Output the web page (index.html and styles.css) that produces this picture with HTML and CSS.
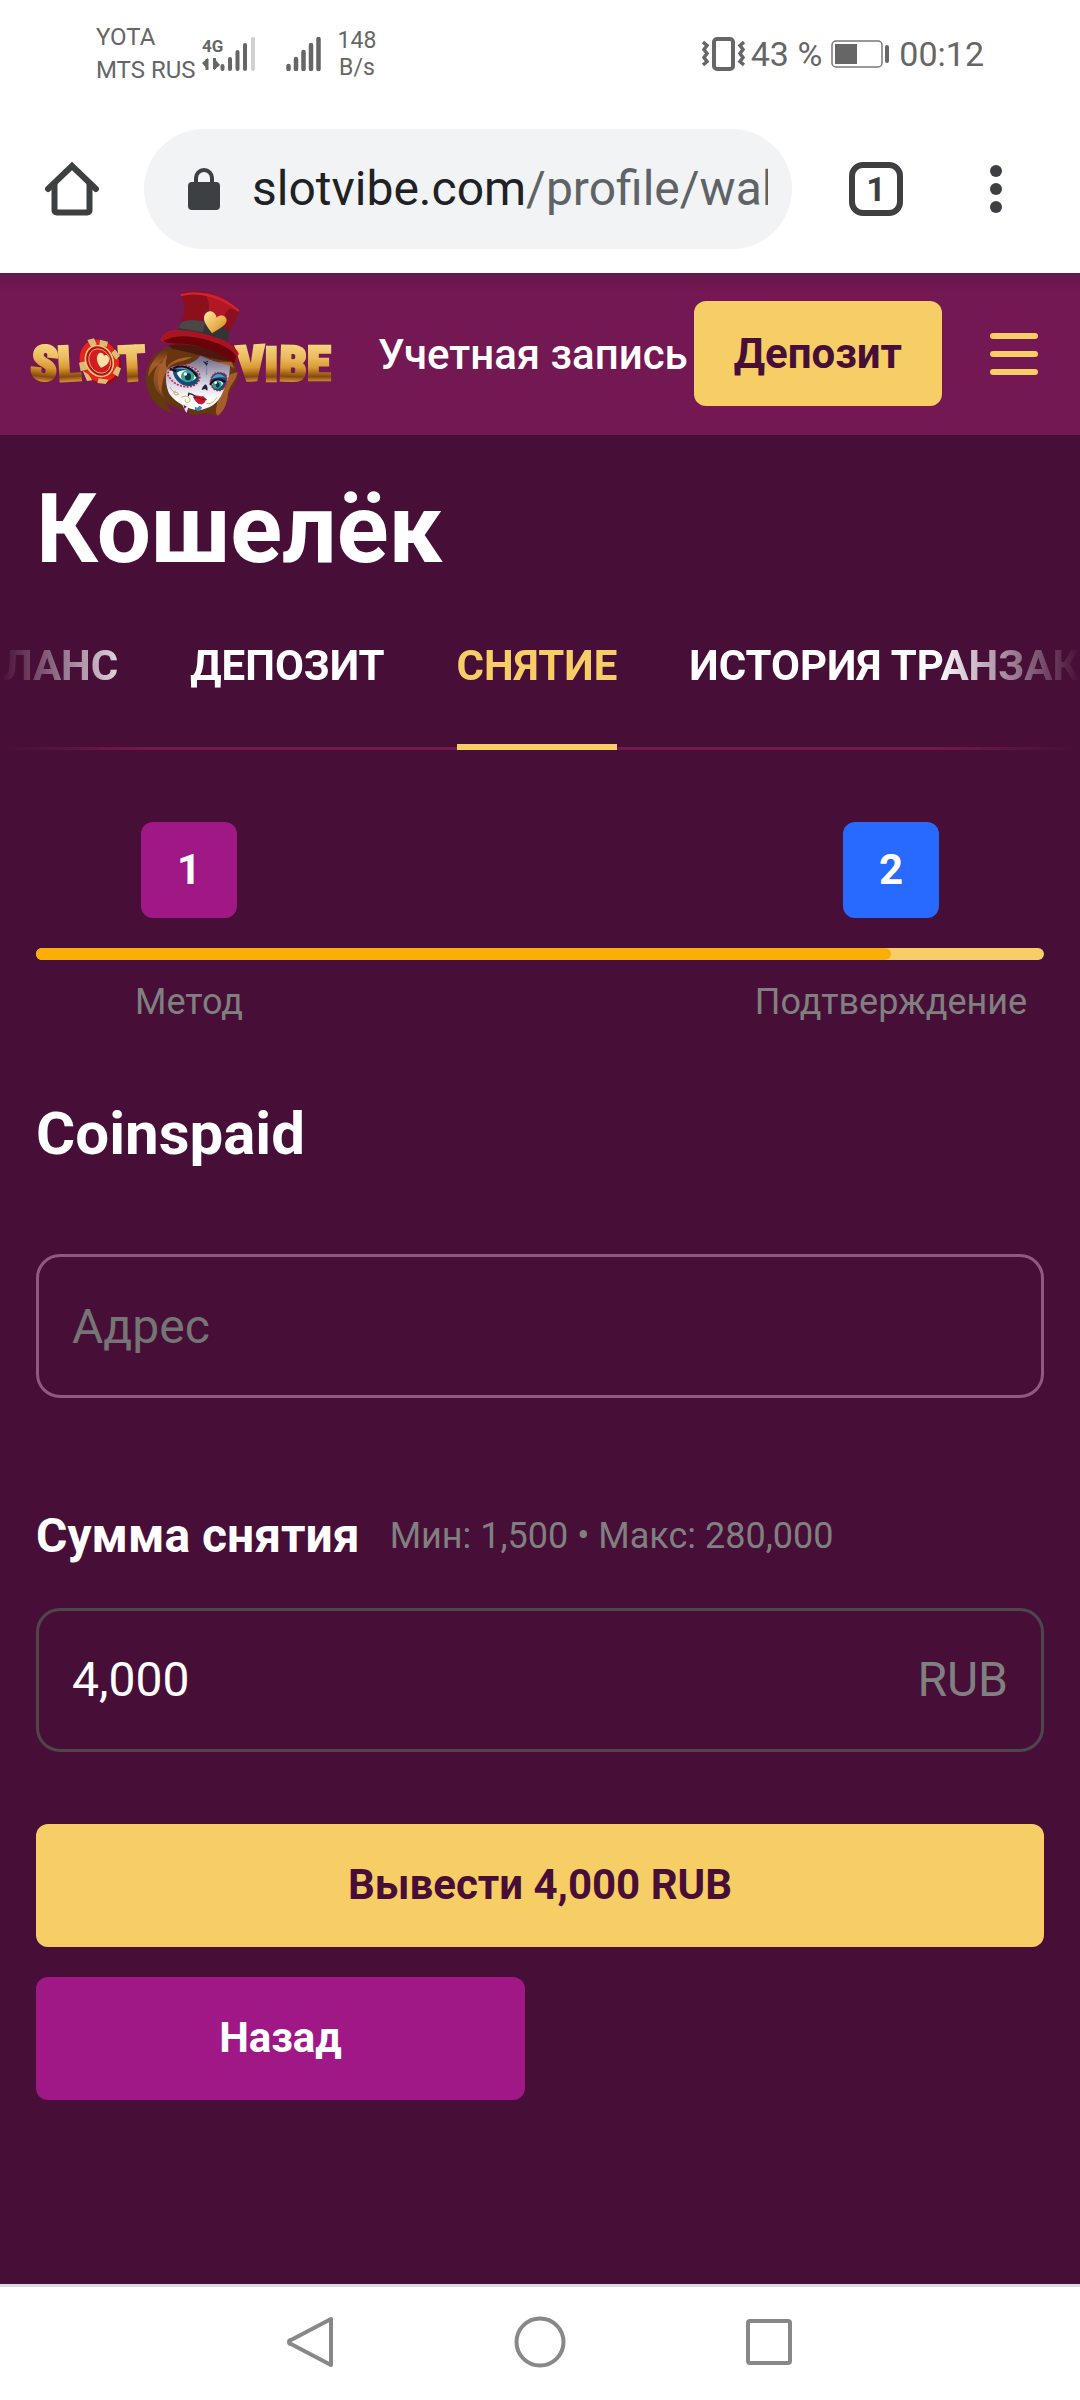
FILE: index.html
```html
<!DOCTYPE html>
<html lang="ru">
<head>
  <meta charset="UTF-8">
  <meta name="viewport" content="width=device-width, initial-scale=1.0">
  <title>Кошелёк - SlotVibe</title>
  <link rel="stylesheet" href="styles.css">
</head>
<body>

  <!-- Status bar -->
  <div class="status">
    <div class="status-side">
      <div class="carrier">YOTA<br>MTS RUS</div>
      <svg class="network" width="54" height="34" viewBox="0 0 54 34" aria-hidden="true">
        <text class="network-type" x="0" y="15">4G</text>
        <path d="M0 26l6-5v12M18 28l-6 5V21" fill="#666"/>
        <path d="M5 22v11M12.500 21v11" stroke="#666" stroke-width="3"/>
        <g stroke="#666" stroke-width="4" stroke-linecap="round">
          <path d="M20.500 29v3M28 22v10M35.500 15v17M43 8v24"/>
          <path d="M51 2v30" stroke="#d0d0d0"/>
        </g>
      </svg>
      <svg class="signal" width="36" height="34" viewBox="0 0 36 34" aria-hidden="true">
        <path d="M2.500 29v3M10 22v10M17.500 15v17M25 8v24M32.500 2v30" stroke="#666" stroke-width="4.500" stroke-linecap="round"/>
      </svg>
      <div class="speed">148<br>B/s</div>
    </div>
    <div class="status-side">
      <svg width="43" height="34" viewBox="0 0 43 34" fill="none" stroke="#666" aria-hidden="true">
        <rect x="12" y="2" width="19" height="30" rx="3" stroke-width="4"/>
        <path d="M1 5l4 3.500-3 4 3 4-3 4 3 4-4 3.500M42 5l-4 3.500 3 4-3 4 3 4-3 4 4 3.500" stroke-width="3.500"/>
      </svg>
      <span class="battery-text">43 %</span>
      <svg class="battery" width="59" height="28" viewBox="0 0 59 28" aria-hidden="true">
        <rect x="1" y="1" width="50" height="26" rx="4" fill="none" stroke="#777" stroke-width="1.500"/>
        <rect x="4" y="4" width="22" height="20" fill="#666"/>
        <rect x="54" y="5" width="4" height="18" rx="2" fill="#666"/>
      </svg>
      <span class="clock">00:12</span>
    </div>
  </div>

  <!-- Browser toolbar -->
  <div class="toolbar">
    <button class="icon-btn" type="button" aria-label="Главная">
      <svg width="54" height="56" viewBox="0 0 54 56" fill="none" stroke="#3c4043" stroke-width="6">
        <path d="M3 28L27 5l24 23" stroke-linecap="round"/>
        <path d="M9.500 22v27.500a2 2 0 0 0 2 2h31a2 2 0 0 0 2-2V22"/>
      </svg>
    </button>
    <button class="address" type="button">
      <svg width="32" height="43" viewBox="0 0 32 43" aria-hidden="true">
        <path d="M8 17v-7a8 8 0 0 1 16 0v7" fill="none" stroke="#3c4043" stroke-width="4"/>
        <rect y="14" width="32" height="28" rx="4" fill="#3c4043"/>
      </svg>
      <span class="url">slotvibe.com<span class="url-path">/profile/wallet</span></span>
    </button>
    <button class="tab-count" type="button">1</button>
    <button class="icon-btn" type="button" aria-label="Меню браузера">
      <svg width="12" height="48" viewBox="0 0 12 48" fill="#3c4043">
        <circle cx="6" cy="6" r="6"/><circle cx="6" cy="24" r="6"/><circle cx="6" cy="42" r="6"/>
      </svg>
    </button>
  </div>

  <!-- Site header -->
  <header class="header">
    <a class="logo" href="#" aria-label="SlotVibe">
      <svg width="302" height="128" viewBox="90 60 906 384">
        <defs>
          <linearGradient id="gold" x1="0" y1="205" x2="0" y2="340" gradientUnits="userSpaceOnUse">
            <stop offset="0" stop-color="#fbe08e"/>
            <stop offset=".45" stop-color="#e9b95c"/>
            <stop offset=".65" stop-color="#d99a32"/>
            <stop offset=".85" stop-color="#8a4a0c"/>
            <stop offset="1" stop-color="#e0a848"/>
          </linearGradient>
          <linearGradient id="heart" x1="0" y1="0" x2="1" y2="1">
            <stop offset="0" stop-color="#ffe9a0"/>
            <stop offset=".6" stop-color="#e8b04c"/>
            <stop offset="1" stop-color="#b87718"/>
          </linearGradient>
          <linearGradient id="face" x1="0" y1="0" x2="0" y2="1">
            <stop offset="0" stop-color="#66607e"/>
            <stop offset=".5" stop-color="#d5d3e2"/>
            <stop offset=".8" stop-color="#ffffff"/>
          </linearGradient>
          <linearGradient id="hair" x1="0" y1="0" x2="0" y2="1">
            <stop offset="0" stop-color="#5c2f12"/>
            <stop offset=".3" stop-color="#a65d2b"/>
            <stop offset="1" stop-color="#70401b"/>
          </linearGradient>
        </defs>

        <!-- lettering -->
        <g class="logo-text" fill="url(#gold)" stroke="url(#gold)">
          <text x="134" y="331" transform="rotate(6 134 270)">S</text>
          <text x="207" y="332" transform="rotate(-3 207 270)">L</text>
          <text x="396" y="332" transform="rotate(-3 396 270)">T</text>
          <text x="752" y="331" transform="rotate(-3 752 270)">V</text>
          <text x="814" y="332">I</text>
          <text x="880" y="332" transform="rotate(2 880 270)">B</text>
          <text x="957" y="331">E</text>
        </g>

        <!-- chip -->
        <ellipse cx="303" cy="277" rx="58" ry="68" fill="#8f0d13" transform="rotate(-28 303 277)"/>
        <ellipse cx="298" cy="273" rx="57" ry="66" fill="#e5231f" transform="rotate(-28 298 273)"/>
        <g fill="#dcbb72">
          <path d="M262 210l20-5 8 18-17 8zM300 209l24 6-4 16-22-5zM345 238l15 19-12 12-14-20zM350 289l13 6-9 25-16-10zM296 325l30 4-9 13-25-3zM248 302l17 11 12 18-16 2zM237 278l20-4 7 24-22 6z"/>
        </g>
        <ellipse cx="298" cy="273" rx="40" ry="48" fill="#b51319" stroke="#f0c975" stroke-width="5" transform="rotate(-28 298 273)"/>
        <ellipse cx="299" cy="273" rx="31" ry="38" fill="#d11d20" stroke="#ffd994" stroke-width="2" transform="rotate(-28 299 273)"/>
        <path d="M303 293c-9-10-15-25-11-36 5-12 17-11 20 0 8-6 17 3 15 15-2 10-12 17-24 21z" fill="#ffe2a4"/>

        <!-- hair behind -->
        <path d="M498 233c-35 15-61 50-61 92 0 30 14 62 37 82 15 13 32 18 45 23-12-12-19-25-18-33 25 18 42 22 55 24l24 16 35-7 30 6c23-9 35-27 41-54 2-20 17-31 28-64-5-3-7-8-6-20l-6-32-90-38z" fill="#63370f"/>
        <path d="M500 237c-33 18-57 51-55 85 12-27 32-44 55-50-25 35-27 75-3 115-25-15-39-40-36-67 6-38 27-56 70-66l50 4 5-21z" fill="url(#hair)"/>
        <path d="M500 257c-25 28-37 75-16 115 1-42 12-76 42-102zM663 323c24-8 36-14 50-16-4 25-25 38-29 65-4 32-12 53-31 65-6-5-6-12-4-22z" fill="#a65d2b"/>

        <!-- face -->
        <path d="M520 289c32 0 68-10 82-34 21 15 52 24 87 26 5 30-12 65-23 91-14 30-39 45-73 49-30-5-64-21-85-49-10-20-13-52-8-72z" fill="url(#face)"/>
        <path d="M503 310c18-29 52-29 83-13 18 12 17 36 0 47-20 14-58 4-72-15-7-8-10-12-11-19z" fill="#d8d7e7" stroke="#d6213d" stroke-width="5" stroke-dasharray="6 4"/>
        <path d="M518 300c20-17 65-10 76 11 9 19-4 34-23 37-26 3-51-18-53-48z" fill="#174a76"/>
        <path d="M525 297c20-14 50-10 65 11-20-9-43-14-65-11z" fill="#5ba3c9"/>
        <path d="M631 334c3-25 21-32 45-22 10 12 5 45-16 50-16 3-28-10-29-28z" fill="#174a76" stroke="#d6213d" stroke-width="4" stroke-dasharray="5 4"/>
        <path d="M634 328c12-22 29-19 44-5-17-2-31-1-44 5z" fill="#4e9ac5"/>
        <path d="M530 309c18-15 47-8 59 14-14 17-46 17-59-14z" fill="#f8faf5"/>
        <ellipse cx="563" cy="319" rx="20" ry="18" fill="#37a291"/>
        <ellipse cx="564" cy="320" rx="9" ry="11" fill="#0b3843"/>
        <circle cx="556" cy="312" r="5" fill="#fff"/>
        <path d="M636 342c12-15 26-13 34-2-6 14-27 20-34 2z" fill="#f8faf5"/>
        <ellipse cx="651" cy="344" rx="14" ry="12" fill="#35a18d"/>
        <ellipse cx="653" cy="345" rx="6" ry="8" fill="#0b3843"/>
        <circle cx="647" cy="338" r="4" fill="#fff"/>
        <path d="M522 294c24-9 52-4 67 23M526 303l-14-6M631 342c12-16 29-17 43-7" fill="none" stroke="#120e1c" stroke-width="6" stroke-linecap="round"/>
        <path d="M614 280c-7-8-5-10 0-5 4-5 13-4 10 4l-4 9zM617 343c-8 5-11 12-12 17l10-3 7 5c2-8 0-14-5-19z" fill="#252039"/>
        <path d="M597 261l25 17 17-10M620 288v27" fill="none" stroke="#817b99" stroke-width="3"/>
        <path d="M565 371c15-3 24 17 55 18M567 368l-2 10" fill="none" stroke="#271629" stroke-width="4"/>
        <path d="M579 380c15-9 20 1 30-2l9 8c-2 15-13 19-23 15-8-5-12-13-16-21z" fill="#ca182e"/>
        <path d="M580 381l34 8" stroke="#611124" stroke-width="3"/>
        <path d="M510 351c12 24 22 11 26 22-13 7-19-7-9-10M544 382c16-9 28 1 26 12-9 9-19 1-12-7M620 401c19 1 23-10 31-19" fill="none" stroke="#d1ad58" stroke-width="3"/>
        <path d="M584 410l8 3 7-6 8 6-9 10-13-4z" fill="#4283bb"/>
        <path d="M546 402l12-1 9 7-8 21z" fill="#eee5f1"/>
        <path d="M551 405l9 5-7 6z" fill="#861350"/>

        <!-- fringe -->
        <path d="M508 231c-8 33-15 51-7 62 30-24 71-20 102-40 27 19 63 26 97 31l-8-25-103-50z" fill="#673611"/>
        <path d="M505 285c16-16 46-25 71-24-23 14-50 12-74 32zM642 275c26 4 49 11 60 20l-7-18z" fill="#a95e2b"/>

        <!-- hat -->
        <path d="M545 71c43-17 119-4 168 46 10 13-16 44-25 74l-149-24c18-31 18-57 6-96z" fill="#8b101c"/>
        <path d="M613 68c44 7 75 21 97 51-18-4-28-9-39 27l-5 41-49-9c9-50 19-76-4-110z" fill="#b01825"/>
        <path d="M545 75c42-13 113-1 169 46M487 209c7-28 45-31 107-17 61 14 111 39 119 60" fill="none" stroke="#d8202f" stroke-width="7" stroke-linecap="round"/>
        <path d="M543 159c37-14 106-2 145 22l-3 31-152-32z" fill="#353333"/>
        <path d="M545 156c21-8 49-6 71 0l-7 31-74-13z" fill="#4b4748"/>
        <path d="M487 200c7-26 82-22 126-8 70 17 112 45 99 73l-7 18c-48-33-91-49-134-56-58-6-92-2-84-27z" fill="#a91322"/>
        <path d="M491 212c38-19 80-15 128-3 55 14 86 37 90 52l-6 20c-46-36-98-54-151-60-32-1-52 2-61-9z" fill="#690309"/>
        <path d="M506 225c70-9 145 15 187 49-73-9-121-27-178-38z" fill="#4b1710"/>
        <path d="M636 190c-12-17-32-39-21-57 11-16 31-9 35 10 12-12 31-5 30 9-2 15-24 24-44 38z" fill="url(#heart)"/>
      </svg>
    </a>
    <a class="account" href="#">Учетная запись</a>
    <div class="header-actions">
      <button class="btn btn-deposit" type="button">Депозит</button>
      <button class="icon-btn" type="button" aria-label="Меню">
        <svg width="48" height="42" viewBox="0 0 48 42" fill="#f7cd65">
          <rect width="48" height="6" rx="3"/><rect y="18" width="48" height="6" rx="3"/><rect y="36" width="48" height="6" rx="3"/>
        </svg>
      </button>
    </div>
  </header>

  <main class="main">
    <h1>Кошелёк</h1>

    <nav class="tabs">
      <a class="tab" href="#">БАЛАНС</a>
      <a class="tab" href="#">ДЕПОЗИТ</a>
      <a class="tab tab-active" href="#">СНЯТИЕ</a>
      <a class="tab" href="#">ИСТОРИЯ ТРАНЗАКЦИЙ</a>
    </nav>

    <!-- Withdrawal steps -->
    <section class="steps">
      <div class="steps-row">
        <div class="step"><span class="step-num">1</span></div>
        <div class="step"><span class="step-num step-current">2</span></div>
      </div>
      <div class="bar"><div class="bar-fill"></div></div>
      <div class="steps-row steps-labels">
        <div class="step">Метод</div>
        <div class="step">Подтверждение</div>
      </div>
    </section>

    <form class="form">
      <h2>Coinspaid</h2>
      <input class="field field-address" type="text" placeholder="Адрес" aria-label="Адрес">

      <div class="amount-head">
        <label for="amount">Сумма снятия</label>
        <span class="limits">Мин: 1,500 • Макс: 280,000</span>
      </div>
      <div class="field field-amount">
        <input type="text" id="amount" value="4,000">
        <span class="currency">RUB</span>
      </div>

      <div class="buttons">
        <button class="btn" type="submit">Вывести 4,000 RUB</button>
        <button class="btn btn-back" type="button">Назад</button>
      </div>
    </form>
  </main>

  <!-- System navigation -->
  <div class="sysnav">
    <button class="icon-btn" type="button" aria-label="Назад">
      <svg width="52" height="52" viewBox="0 0 52 52" fill="none" stroke="#888" stroke-width="4" stroke-linejoin="round">
        <path d="M46 3v46L6 28a2 2 0 0 1 0-4z"/>
      </svg>
    </button>
    <button class="icon-btn" type="button" aria-label="Домой">
      <svg width="52" height="52" viewBox="0 0 52 52" fill="none" stroke="#888" stroke-width="4">
        <circle cx="26" cy="26" r="23.500"/>
      </svg>
    </button>
    <button class="icon-btn" type="button" aria-label="Недавние">
      <svg width="52" height="52" viewBox="0 0 52 52" fill="none" stroke="#888" stroke-width="4">
        <rect x="5" y="5" width="42" height="42" rx="2"/>
      </svg>
    </button>
  </div>

</body>
</html>
```

FILE: styles.css
```css
* {
  box-sizing: border-box;
}

body {
  margin: 0;
  min-height: 100vh;
  display: flex;
  flex-direction: column;
  font-family: Roboto, sans-serif;
  font-size: 42px;
  color: #fff;
  background: #470f37;
  overflow-x: hidden;
}

svg {
  display: block;
  flex-shrink: 0;
}

a {
  color: inherit;
  text-decoration: none;
}

button, input {
  font: inherit;
  color: inherit;
  border: none;
  background: none;
  padding: 0;
  margin: 0;
}

button {
  cursor: pointer;
}

/* Status bar */
.status {
  display: flex;
  justify-content: space-between;
  align-items: center;
  padding: 21px 96px 22px;
  background: #fff;
  color: #666;
}

.status-side {
  display: flex;
  align-items: center;
}

.carrier {
  font-size: 24px;
  line-height: 33px;
}

.network {
  margin: 0 30px 0 6px;
}

.network-type {
  font-size: 17px;
  font-weight: bold;
  fill: #666;
}

.signal {
  margin-right: 16px;
}

.speed {
  font-size: 23px;
  line-height: 27px;
  text-align: center;
}

.battery-text,
.clock {
  font-size: 34px;
  line-height: 40px;
}

.battery-text {
  margin: 0 9px 0 6px;
}

.battery {
  margin-right: 9px;
}

/* Browser toolbar */
.toolbar {
  display: flex;
  align-items: center;
  padding: 20px 78px 24px 45px;
  background: #fff;
}

.address {
  flex: 1;
  min-width: 0;
  display: flex;
  align-items: center;
  gap: 32px;
  margin: 0 57px 0 45px;
  padding: 32px 24px 32px 44px;
  border-radius: 60px;
  background: #f1f3f4;
  color: #202124;
  font-size: 48px;
  line-height: 56px;
  text-align: left;
}

.url {
  overflow: hidden;
  white-space: nowrap;
}

.url-path {
  color: #5f6368;
}

.tab-count {
  width: 54px;
  height: 54px;
  margin-right: 87px;
  border: 6px solid #3c4043;
  border-radius: 14px;
  color: #3c4043;
  font-size: 34px;
  font-weight: 700;
  line-height: 40px;
}

/* Header */
.header {
  display: flex;
  align-items: center;
  padding: 0 42px 0 30px;
  background: linear-gradient(#65174a, #741853 20px);
}

.logo {
  margin-right: 46px;
}

.logo-text {
  font-family: 'Roboto Condensed', 'Liberation Sans Narrow', Roboto, sans-serif;
  font-size: 146px;
  font-weight: 900;
  stroke-width: 8px;
  text-anchor: middle;
}

.account {
  font-weight: 500;
  white-space: nowrap;
}

.header-actions {
  display: flex;
  align-items: center;
  gap: 48px;
  margin-left: auto;
  padding: 28px 0 29px;
}

.btn {
  padding: 35px 40px 37px;
  border-radius: 12px;
  background: #f7cd65;
  color: #470f37;
  font-weight: 700;
  line-height: 51px;
}

.btn-deposit {
  padding: 27px 40px;
}

/* Wallet */
.main {
  flex: 1;
  padding-top: 38px;
}

h1 {
  margin: 0 36px 56px;
  font-size: 96px;
  line-height: 112px;
}

.tabs {
  display: flex;
  gap: 72px;
  overflow: hidden;
  background: linear-gradient(#741853, #741853) bottom / 100% 3px no-repeat;
  -webkit-mask-image: linear-gradient(to right, transparent, #000 144px, #000 calc(100% - 144px), transparent);
  mask-image: linear-gradient(to right, transparent, #000 144px, #000 calc(100% - 144px), transparent);
}

.tab:first-child {
  margin-left: -52px;
}

.tab {
  flex-shrink: 0;
  padding-bottom: 53px;
  border-bottom: 6px solid transparent;
  font-weight: 700;
  line-height: 50px;
  white-space: nowrap;
}

.tab-active {
  color: #f7cd65;
  border-color: #f7cd65;
}

.steps {
  padding: 72px 36px 0;
}

.steps-row {
  display: flex;
  justify-content: space-between;
}

.step {
  width: 306px;
  display: flex;
  justify-content: center;
}

.step-num {
  width: 96px;
  border-radius: 12px;
  background: #a01885;
  font-weight: 700;
  line-height: 96px;
  text-align: center;
}

.step-current {
  background: #286aff;
}

.bar {
  margin: 30px 0 20px;
  height: 12px;
  border-radius: 6px;
  background: #f7cd65;
}

.bar-fill {
  width: calc(100% - 153px);
  height: 100%;
  border-radius: 6px;
  background: #fbae03;
}

.steps-labels,
.limits {
  color: #808080;
  font-size: 36px;
  line-height: 44px;
}

.form {
  padding: 74px 36px 0;
}

h2 {
  margin: 0 0 84px;
  font-size: 60px;
  line-height: 72px;
}

.field {
  width: 100%;
  padding: 41px 33px;
  border: 3px solid #4d474c;
  border-radius: 24px;
  font-size: 48px;
  line-height: 56px;
}

.field-address {
  display: block;
  height: 144px;
  border-color: #91597f;
}

.field-address::placeholder {
  color: #757575;
}

.amount-head {
  display: flex;
  align-items: center;
  gap: 30px;
  margin: 110px 0 44px;
  font-size: 48px;
  font-weight: 700;
  line-height: 56px;
}

.limits {
  font-weight: 400;
}

.field-amount {
  display: flex;
}

.field-amount input {
  flex: 1;
  min-width: 0;
}

.currency {
  color: #808080;
}

.buttons {
  display: flex;
  flex-direction: column;
  gap: 30px;
  padding: 72px 0;
}

.btn-back {
  width: calc(50% - 15px);
  background: #a01885;
  color: #fff;
}

/* System navigation */
.sysnav {
  display: flex;
  justify-content: center;
  gap: 177px;
  padding: 29px 0 32px;
  border-top: 3px solid #dcdadd;
  background: #fff;
}
```
